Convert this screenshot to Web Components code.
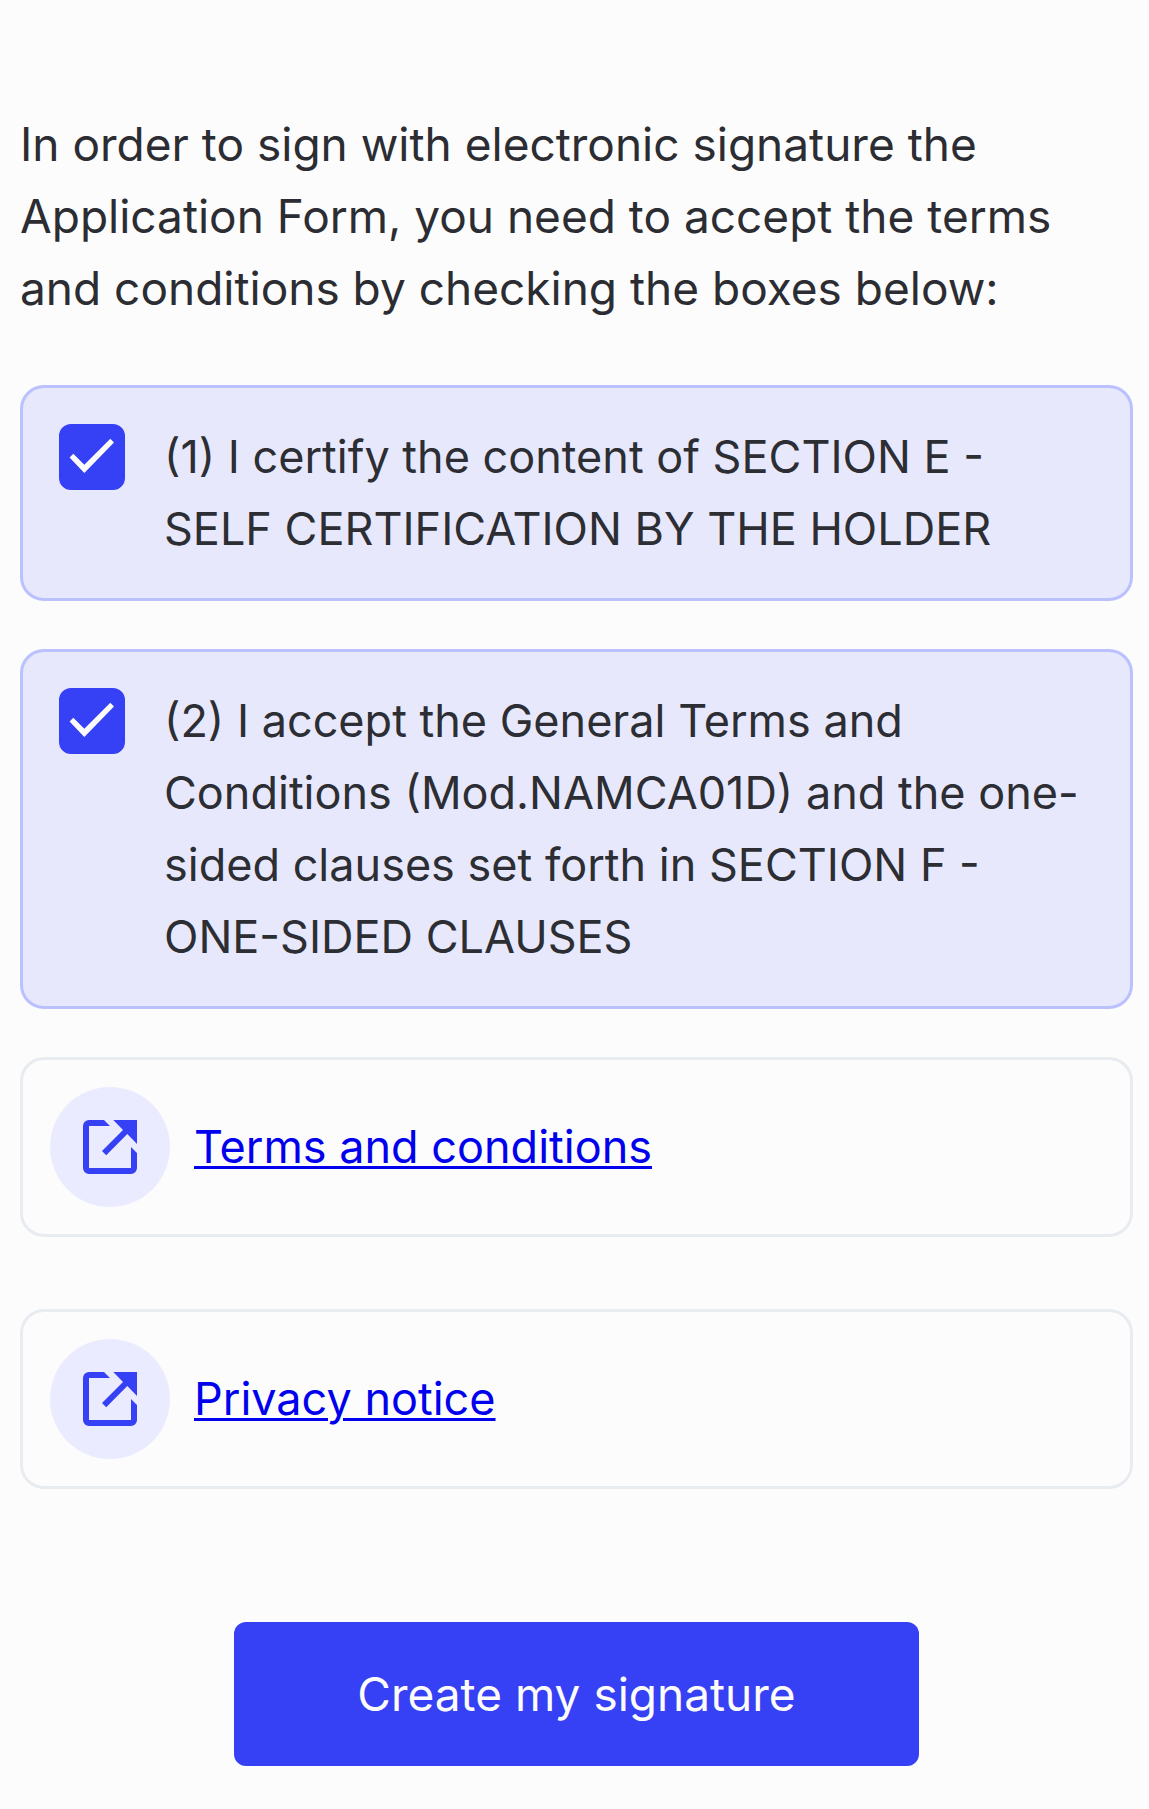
<!DOCTYPE html>
<html lang="en">
<head>
<meta charset="utf-8">
<meta name="viewport" content="width=device-width, initial-scale=1">
<title>Electronic signature</title>
<style>
  body {
    margin: 0;
    background: #fcfcfc;
    color: #2c2d33;
    font: 400 45px/72px Inter, "Liberation Sans", sans-serif;
    --brand: #3640f5;
    --surface: #fcfcfc;
    --text-large: 46px;
  }
</style>
</head>
<body>
<signature-consent>
  <span slot="intro">In order to sign with electronic signature the Application Form, you need to accept the terms and conditions by checking the boxes below:</span>
  <consent-option slot="options">(1) I certify the content of SECTION E - SELF CERTIFICATION BY THE HOLDER</consent-option>
  <consent-option slot="options">(2) I accept the General Terms and Conditions (Mod.NAMCA01D) and the one-sided clauses set forth in SECTION F - ONE-SIDED CLAUSES</consent-option>
  <document-link slot="documents" href="#terms">Terms and conditions</document-link>
  <document-link slot="documents" href="#privacy">Privacy notice</document-link>
  <action-button slot="action">Create my signature</action-button>
</signature-consent>

<template id="signature-consent">
  <style>
    :host { display: block; }
    main { display: flex; flex-direction: column; padding: 108px 16px 43px 20px; }
    p { margin: 0; padding-right: 36px; font-size: var(--text-large); }
    .options { display: flex; flex-direction: column; gap: 48px; margin-top: 61px; }
    .documents { display: flex; flex-direction: column; gap: 72px; margin-top: 48px; }
    .action { display: flex; justify-content: center; margin-top: 133px; }
  </style>
  <main>
    <p><slot name="intro"></slot></p>
    <div class="options"><slot name="options"></slot></div>
    <div class="documents"><slot name="documents"></slot></div>
    <div class="action"><slot name="action"></slot></div>
  </main>
</template>

<template id="consent-option">
  <style>
    :host { display: block; }
    label {
      display: flex;
      align-items: flex-start;
      gap: 39px;
      padding: 33px 36px;
      border: 3px solid #bbc1ff;
      border-radius: 24px;
      background: #e8e8fd;
      color: #2c2e33;
      cursor: pointer;
    }
    .box { display: grid; flex: none; margin-top: 3px; }
    input, svg { grid-area: 1 / 1; width: 66px; height: 66px; margin: 0; }
    input {
      appearance: none;
      box-sizing: border-box;
      border: 3px solid var(--brand);
      border-radius: 12px;
      background: var(--surface);
    }
    input:checked { background: var(--brand); }
    svg { fill: var(--surface); pointer-events: none; visibility: hidden; }
    input:checked + svg { visibility: visible; }
    .text { flex: 1; }
  </style>
  <label>
    <span class="box">
      <input type="checkbox" checked>
      <svg viewBox="0 0 66 66" aria-hidden="true"><path d="M14.3 29.7 25.3 40.7 51.3 14.7 55 18.4 25.3 49 10.6 33.4z"/></svg>
    </span>
    <span class="text"><slot></slot></span>
  </label>
</template>

<template id="document-link">
  <style>
    :host { display: block; }
    .card {
      display: flex;
      align-items: center;
      gap: 24px;
      padding: 27px;
      border: 3px solid #e8ecf1;
      border-radius: 24px;
    }
    .icon {
      display: grid;
      place-items: center;
      flex: none;
      width: 120px;
      height: 120px;
      border-radius: 50%;
      background: #ebebff;
    }
    svg { width: 54px; height: 54px; fill: var(--brand); }
    a { color: #0000ee; text-decoration-thickness: 3px; text-underline-offset: 3px; }
  </style>
  <div class="card">
    <span class="icon">
      <svg viewBox="0 0 54 54" aria-hidden="true">
        <path d="M6 0H21L27 6H6V48H48V27L54 33V48A6 6 0 0 1 48 54H6A6 6 0 0 1 0 48V6A6 6 0 0 1 6 0Z"/>
        <path d="M30.3 0H54V24L44.3 14.1 23.2 35.2 19 31 40 10Z"/>
      </svg>
    </span>
    <a><slot></slot></a>
  </div>
</template>

<template id="action-button">
  <style>
    :host { display: block; }
    button {
      padding: 36px 123px;
      border: 0;
      border-radius: 12px;
      background: var(--brand);
      color: var(--surface);
      font: inherit;
      font-size: var(--text-large);
      cursor: pointer;
    }
  </style>
  <button type="button"><slot></slot></button>
</template>

<script>
  class TemplateElement extends HTMLElement {
    constructor() {
      super();
      const template = document.getElementById(this.localName);
      this.attachShadow({ mode: 'open' }).append(template.content.cloneNode(true));
    }
  }
  class SignatureConsent extends TemplateElement {}
  class ConsentOption extends TemplateElement {}
  class ActionButton extends TemplateElement {}
  class DocumentLink extends TemplateElement {
    connectedCallback() {
      this.shadowRoot.querySelector('a').href = this.getAttribute('href');
    }
  }
  customElements.define('signature-consent', SignatureConsent);
  customElements.define('consent-option', ConsentOption);
  customElements.define('document-link', DocumentLink);
  customElements.define('action-button', ActionButton);
</script>
</body>
</html>
